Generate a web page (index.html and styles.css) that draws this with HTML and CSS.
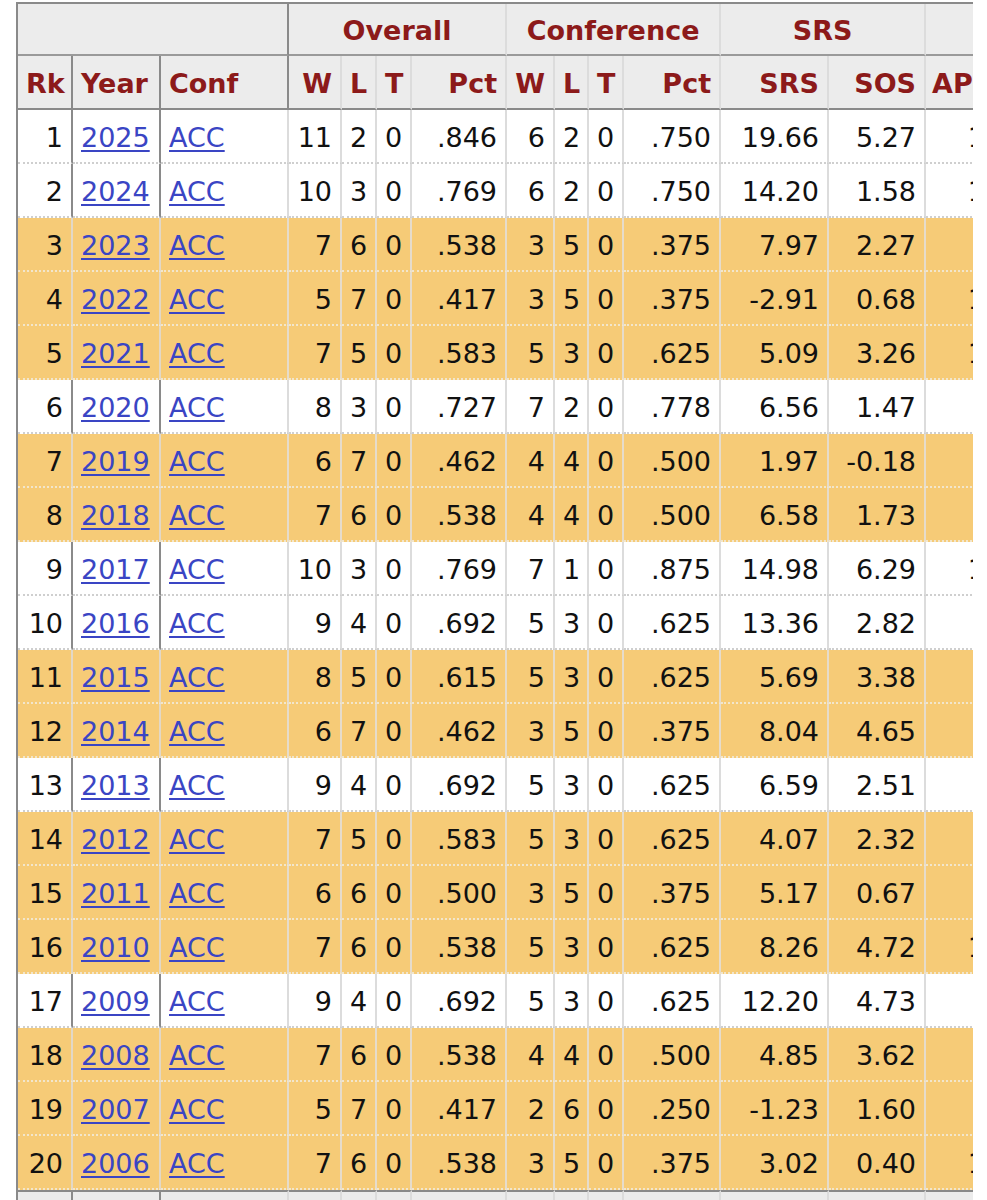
FILE: index.html
```html
<!DOCTYPE html>
<html>
<head>
<meta charset="utf-8">
<title>Year-by-Year Results</title>
<link rel="stylesheet" href="styles.css">
</head>
<body>
<div class="wrap">
<table class="stats">
<colgroup>
<col class="c-rk"><col class="c-year"><col class="c-conf">
<col class="c-w"><col class="c-l"><col class="c-t"><col class="c-pct">
<col class="c-cw"><col class="c-cl"><col class="c-ct"><col class="c-cpct">
<col class="c-srs"><col class="c-sos"><col class="c-ap">
</colgroup>
<thead>
<tr class="over">
<th colspan="3" class="blank"></th>
<th colspan="4">Overall</th>
<th colspan="4">Conference</th>
<th colspan="2">SRS</th>
<th class="last"></th>
</tr>
<tr class="cols">
<th class="r rk">Rk</th><th class="l yr">Year</th><th class="l cf">Conf</th>
<th class="r">W</th><th class="r">L</th><th class="r">T</th><th class="r">Pct</th>
<th class="r">W</th><th class="r">L</th><th class="r">T</th><th class="r">Pct</th>
<th class="r">SRS</th><th class="r">SOS</th><th class="l ap">AP Pre</th>
</tr>
</thead>
<tbody>
<tr><td class="rk">1</td><td class="yr"><a href="#">2025</a></td><td class="cf"><a href="#">ACC</a></td><td>11</td><td>2</td><td>0</td><td>.846</td><td>6</td><td>2</td><td>0</td><td>.750</td><td>19.66</td><td>5.27</td><td>12</td></tr>
<tr><td class="rk">2</td><td class="yr"><a href="#">2024</a></td><td class="cf"><a href="#">ACC</a></td><td>10</td><td>3</td><td>0</td><td>.769</td><td>6</td><td>2</td><td>0</td><td>.750</td><td>14.20</td><td>1.58</td><td>10</td></tr>
<tr class="hl"><td class="rk">3</td><td class="yr"><a href="#">2023</a></td><td class="cf"><a href="#">ACC</a></td><td>7</td><td>6</td><td>0</td><td>.538</td><td>3</td><td>5</td><td>0</td><td>.375</td><td>7.97</td><td>2.27</td><td></td></tr>
<tr class="hl"><td class="rk">4</td><td class="yr"><a href="#">2022</a></td><td class="cf"><a href="#">ACC</a></td><td>5</td><td>7</td><td>0</td><td>.417</td><td>3</td><td>5</td><td>0</td><td>.375</td><td>-2.91</td><td>0.68</td><td>13</td></tr>
<tr class="hl"><td class="rk">5</td><td class="yr"><a href="#">2021</a></td><td class="cf"><a href="#">ACC</a></td><td>7</td><td>5</td><td>0</td><td>.583</td><td>5</td><td>3</td><td>0</td><td>.625</td><td>5.09</td><td>3.26</td><td>17</td></tr>
<tr><td class="rk">6</td><td class="yr"><a href="#">2020</a></td><td class="cf"><a href="#">ACC</a></td><td>8</td><td>3</td><td>0</td><td>.727</td><td>7</td><td>2</td><td>0</td><td>.778</td><td>6.56</td><td>1.47</td><td></td></tr>
<tr class="hl"><td class="rk">7</td><td class="yr"><a href="#">2019</a></td><td class="cf"><a href="#">ACC</a></td><td>6</td><td>7</td><td>0</td><td>.462</td><td>4</td><td>4</td><td>0</td><td>.500</td><td>1.97</td><td>-0.18</td><td></td></tr>
<tr class="hl"><td class="rk">8</td><td class="yr"><a href="#">2018</a></td><td class="cf"><a href="#">ACC</a></td><td>7</td><td>6</td><td>0</td><td>.538</td><td>4</td><td>4</td><td>0</td><td>.500</td><td>6.58</td><td>1.73</td><td></td></tr>
<tr><td class="rk">9</td><td class="yr"><a href="#">2017</a></td><td class="cf"><a href="#">ACC</a></td><td>10</td><td>3</td><td>0</td><td>.769</td><td>7</td><td>1</td><td>0</td><td>.875</td><td>14.98</td><td>6.29</td><td>14</td></tr>
<tr><td class="rk">10</td><td class="yr"><a href="#">2016</a></td><td class="cf"><a href="#">ACC</a></td><td>9</td><td>4</td><td>0</td><td>.692</td><td>5</td><td>3</td><td>0</td><td>.625</td><td>13.36</td><td>2.82</td><td></td></tr>
<tr class="hl"><td class="rk">11</td><td class="yr"><a href="#">2015</a></td><td class="cf"><a href="#">ACC</a></td><td>8</td><td>5</td><td>0</td><td>.615</td><td>5</td><td>3</td><td>0</td><td>.625</td><td>5.69</td><td>3.38</td><td></td></tr>
<tr class="hl"><td class="rk">12</td><td class="yr"><a href="#">2014</a></td><td class="cf"><a href="#">ACC</a></td><td>6</td><td>7</td><td>0</td><td>.462</td><td>3</td><td>5</td><td>0</td><td>.375</td><td>8.04</td><td>4.65</td><td></td></tr>
<tr><td class="rk">13</td><td class="yr"><a href="#">2013</a></td><td class="cf"><a href="#">ACC</a></td><td>9</td><td>4</td><td>0</td><td>.692</td><td>5</td><td>3</td><td>0</td><td>.625</td><td>6.59</td><td>2.51</td><td></td></tr>
<tr class="hl"><td class="rk">14</td><td class="yr"><a href="#">2012</a></td><td class="cf"><a href="#">ACC</a></td><td>7</td><td>5</td><td>0</td><td>.583</td><td>5</td><td>3</td><td>0</td><td>.625</td><td>4.07</td><td>2.32</td><td></td></tr>
<tr class="hl"><td class="rk">15</td><td class="yr"><a href="#">2011</a></td><td class="cf"><a href="#">ACC</a></td><td>6</td><td>6</td><td>0</td><td>.500</td><td>3</td><td>5</td><td>0</td><td>.375</td><td>5.17</td><td>0.67</td><td></td></tr>
<tr class="hl"><td class="rk">16</td><td class="yr"><a href="#">2010</a></td><td class="cf"><a href="#">ACC</a></td><td>7</td><td>6</td><td>0</td><td>.538</td><td>5</td><td>3</td><td>0</td><td>.625</td><td>8.26</td><td>4.72</td><td>11</td></tr>
<tr><td class="rk">17</td><td class="yr"><a href="#">2009</a></td><td class="cf"><a href="#">ACC</a></td><td>9</td><td>4</td><td>0</td><td>.692</td><td>5</td><td>3</td><td>0</td><td>.625</td><td>12.20</td><td>4.73</td><td></td></tr>
<tr class="hl"><td class="rk">18</td><td class="yr"><a href="#">2008</a></td><td class="cf"><a href="#">ACC</a></td><td>7</td><td>6</td><td>0</td><td>.538</td><td>4</td><td>4</td><td>0</td><td>.500</td><td>4.85</td><td>3.62</td><td></td></tr>
<tr class="hl"><td class="rk">19</td><td class="yr"><a href="#">2007</a></td><td class="cf"><a href="#">ACC</a></td><td>5</td><td>7</td><td>0</td><td>.417</td><td>2</td><td>6</td><td>0</td><td>.250</td><td>-1.23</td><td>1.60</td><td></td></tr>
<tr class="hl"><td class="rk">20</td><td class="yr"><a href="#">2006</a></td><td class="cf"><a href="#">ACC</a></td><td>7</td><td>6</td><td>0</td><td>.538</td><td>3</td><td>5</td><td>0</td><td>.375</td><td>3.02</td><td>0.40</td><td>16</td></tr>
<tr class="repeat"><th class="r rk">Rk</th><th class="l yr">Year</th><th class="l cf">Conf</th><th class="r">W</th><th class="r">L</th><th class="r">T</th><th class="r">Pct</th><th class="r">W</th><th class="r">L</th><th class="r">T</th><th class="r">Pct</th><th class="r">SRS</th><th class="r">SOS</th><th class="l ap">AP Pre</th></tr>
</tbody>
</table>
</div>
</body>
</html>
```

FILE: styles.css
```css
html, body {
  margin: 0;
  padding: 0;
  background: #ffffff;
}

body {
  font-family: "DejaVu Sans", Verdana, sans-serif;
  font-size: 27px;
  color: #111111;
}

.wrap {
  margin: 2px 14px 0 16px;
  overflow: hidden;
}

.stats {
  border-collapse: separate;
  border-spacing: 0;
  table-layout: fixed;
  width: 995px;
  border-top: 2px solid #8a8a8a;
  border-left: 2px solid #8a8a8a;
}

.c-rk { width: 55px; }
.c-year { width: 88px; }
.c-conf { width: 128px; }
.c-w { width: 53px; }
.c-l { width: 35px; }
.c-t { width: 35px; }
.c-pct { width: 95px; }
.c-cw { width: 48px; }
.c-cl { width: 34px; }
.c-ct { width: 35px; }
.c-cpct { width: 97px; }
.c-srs { width: 108px; }
.c-sos { width: 97px; }
.c-ap { width: 86px; }

.stats th,
.stats td {
  box-sizing: border-box;
  padding: 0 8px;
  white-space: nowrap;
  overflow: visible;
  border-right: 2px solid #dcdcdc;
}

.stats th {
  background: #ececec;
  color: #8c1a1a;
  font-weight: bold;
}

.over th {
  height: 52px;
  padding-top: 3px;
  line-height: 47px;
  text-align: center;
  border-bottom: 2px solid #9a9a9a;
}

.over th.blank {
  border-right-color: #8a8a8a;
}

.cols th {
  height: 54px;
  padding-top: 4px;
  line-height: 48px;
  border-bottom: 2px solid #8a8a8a;
}

.stats th.r { text-align: right; }
.stats th.l { text-align: left; }
.stats th.ap { padding-left: 6px; }

.cols th.rk,
.cols th.yr,
.cols th.cf,
.repeat th.rk,
.repeat th.yr {
  border-right-color: #8a8a8a;
}

.stats td {
  height: 54px;
  padding-top: 4px;
  line-height: 48px;
  text-align: right;
  background: #ffffff;
  border-bottom: 2px dotted #cfcfcf;
}

.stats td.yr,
.stats td.cf {
  text-align: left;
}

.stats td.rk,
.stats td.yr {
  border-right-color: #8a8a8a;
}

.stats tr.hl td {
  background: #f6cb77;
  border-bottom-color: #f2e6cc;
  border-right-color: #e6dccb;
}

.stats tr.hl td.rk,
.stats tr.hl td.yr {
  border-right-color: #e2d8c6;
}

.stats a {
  color: #3a45c4;
  text-decoration: underline;
  text-underline-offset: 3px;
}

.repeat th {
  height: 54px;
  padding-top: 4px;
  line-height: 48px;
  border-top: 2px solid #8a8a8a;
  border-bottom: 2px solid #8a8a8a;
}
```
